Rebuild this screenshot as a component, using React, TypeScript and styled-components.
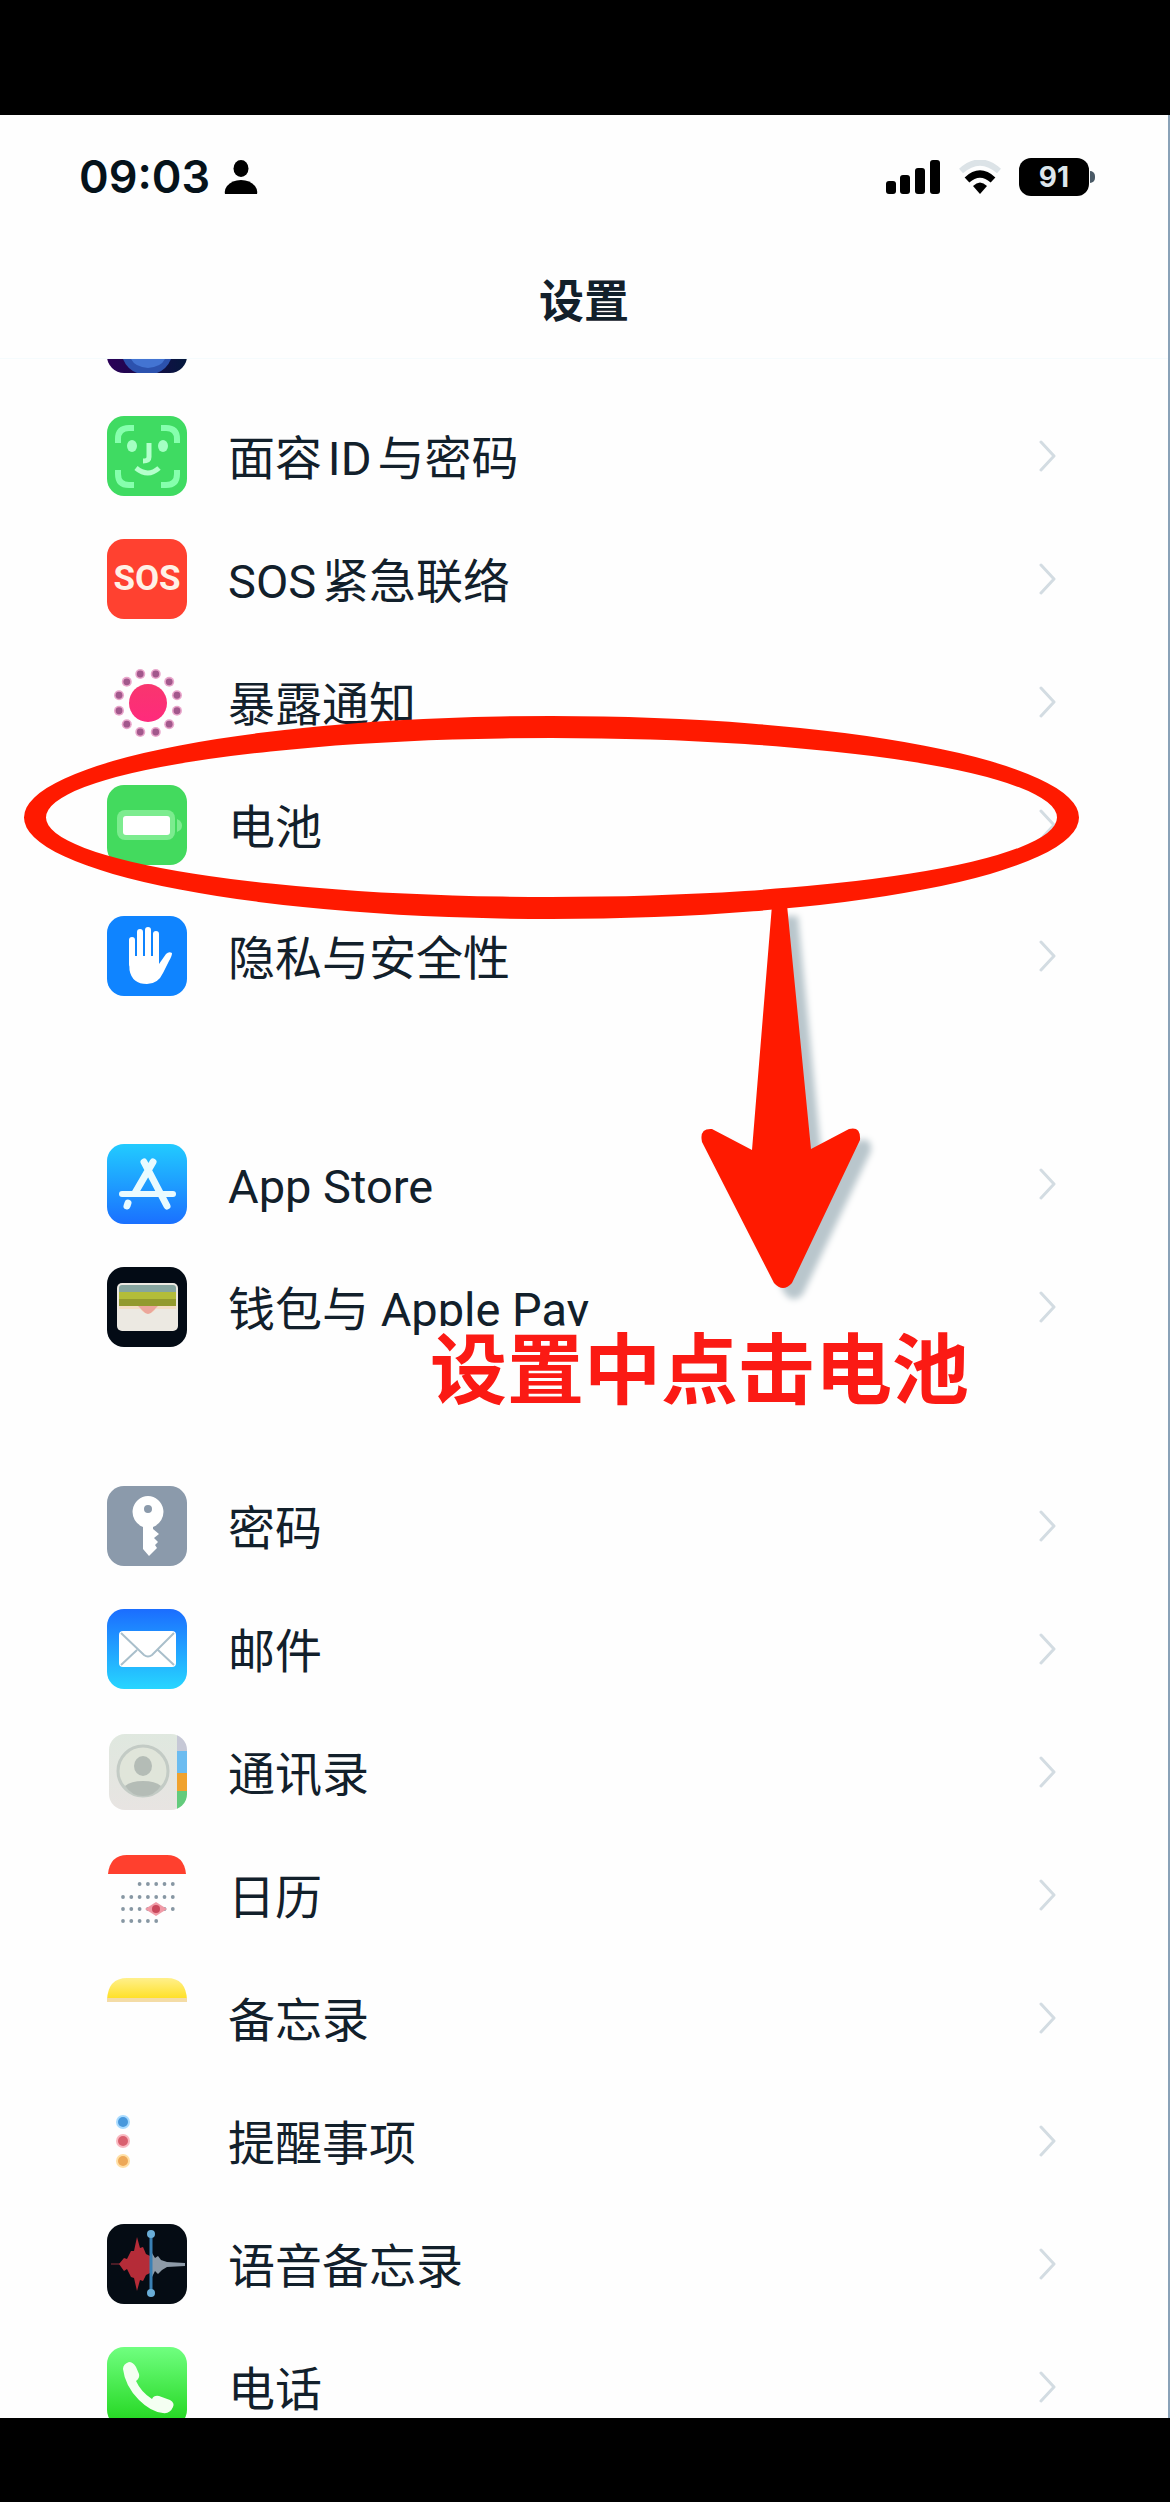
import React from "react";
import styled, { createGlobalStyle } from "styled-components";

const INK = "#12202b";
const MARK_RED = "#ff1a00";

const GlobalStyle = createGlobalStyle`
  * { box-sizing: border-box; }
  body {
    margin: 0;
    background: #000;
    color: ${INK};
    font-family: Roboto, "Noto Sans CJK SC", sans-serif;
  }
`;

const Page = styled.div`
  display: flex;
  height: 100vh;
  padding: 115px 0 84px;
  background: #000;
`;

const Screen = styled.main`
  flex: 1;
  display: flex;
  flex-direction: column;
  min-width: 0;
  overflow: hidden;
  background: #fefefe;
  border-right: 2px solid #8aa2b8;
`;

const StatusBar = styled.div`
  display: flex;
  justify-content: space-between;
  align-items: center;
  height: 124px;
  padding: 0 73px 0 79px;
`;

const StatusGroup = styled.div<{ $gap: number }>`
  display: flex;
  align-items: center;
  gap: ${(p) => p.$gap}px;
`;

const Clock = styled.time`
  font: 600 45px/56px Inter, sans-serif;
  color: #05121a;
`;

const BatteryPill = styled.div`
  display: flex;
  align-items: center;
`;

const BatteryBody = styled.div`
  width: 70px;
  height: 38px;
  border-radius: 12px;
  background: #000;
  color: #dde6ec;
  font: 700 28px/38px Inter, sans-serif;
  text-align: center;
`;

const BatteryNub = styled.div`
  width: 5px;
  height: 12px;
  margin-left: 1px;
  border-radius: 0 5px 5px 0;
  background: #4a5a66;
`;

const NavBar = styled.header`
  display: flex;
  justify-content: center;
  align-items: center;
  height: 120px;
  border-bottom: 1px solid #f5fbfd;
`;

const Title = styled.h1`
  margin: 0;
  font: 700 45px/64px "Noto Sans CJK SC", sans-serif;
`;

const Scroller = styled.div`
  flex: 1;
  display: flex;
  flex-direction: column;
  min-height: 0;
  overflow: hidden;
`;

const ScrolledAway = styled.div`
  flex: none;
  display: flex;
  align-items: flex-end;
  height: 35px;
  padding: 0 107px 21px;
  overflow: hidden;
`;

const Group = styled.ul<{ $after: number }>`
  flex: none;
  list-style: none;
  margin: 0 0 ${(p) => p.$after}px;
  padding: 0;
`;

const Item = styled.li`
  position: relative;
`;

const RowLink = styled.a`
  display: flex;
  align-items: center;
  gap: 41px;
  height: 123px;
  padding: 0 111px 0 107px;
  color: inherit;
  text-decoration: none;
`;

const Label = styled.span`
  flex: 1;
  padding-top: 6px;
  font-size: 47px;
  line-height: 64px;
  white-space: nowrap;
  text-autospace: normal;
`;

const IconSvg = styled.svg`
  flex: none;
  display: block;
  width: 80px;
  height: 80px;
`;

const SosTile = styled.span`
  flex: none;
  width: 80px;
  height: 80px;
  border-radius: 17px;
  background: #ff4130;
  color: #fff1e6;
  font: 700 35px/80px Roboto, sans-serif;
  text-align: center;
`;

const Glyph = styled.svg`
  flex: none;
  display: block;
`;

const Ring = styled.div`
  position: absolute;
  z-index: 1;
  top: -47px;
  left: 24px;
  right: 89px;
  height: 203px;
  border: 22px solid ${MARK_RED};
  border-radius: 50%;
  pointer-events: none;
`;

const ArrowMark = styled.svg`
  position: absolute;
  z-index: 1;
  top: 138px;
  left: 690px;
  filter: drop-shadow(11px 11px 3px #b9c6cc);
  pointer-events: none;
`;

const Caption = styled.strong`
  position: absolute;
  z-index: 1;
  top: 81px;
  left: 430px;
  background: #fefefe;
  color: #fb1a14;
  font: 700 77px/78px "Noto Sans CJK SC", sans-serif;
  white-space: nowrap;
`;

const Tile = ({ fill }: { fill: string }) => <rect width="80" height="80" rx="17" fill={fill} />;

const Gradient = ({ id, from, to, across }: { id: string; from: string; to: string; across?: boolean }) => (
  <linearGradient id={id} x1="0" y1="0" x2={across ? 1 : 0} y2={across ? 0 : 1}>
    <stop offset="0" stopColor={from} />
    <stop offset="1" stopColor={to} />
  </linearGradient>
);

const Icon = ({ children }: { children: React.ReactNode }) => (
  <IconSvg viewBox="0 0 80 80" aria-hidden="true">
    {children}
  </IconSvg>
);

const FaceIcon = () => (
  <Icon>
    <Tile fill="#3fdb62" />
    <g fill="none" stroke="#86ffad" strokeWidth="6">
      <path d="M11 27V23Q11 12 22 12H27M54 12H59Q70 12 70 23V27M70 54V58Q70 69 59 69H54M27 69H22Q11 69 11 58V54" />
      <path d="M42 27V41Q42 45 36 45" stroke="#b4ffcc" strokeWidth="5" />
      <path d="M29 52Q41 62 52 52" stroke="#b4ffcc" strokeWidth="5" />
    </g>
    <ellipse cx="25" cy="30" rx="5" ry="6" fill="#a4ffc2" />
    <ellipse cx="56" cy="30" rx="5" ry="6" fill="#a4ffc2" />
  </Icon>
);

const ExposureIcon = () => (
  <Icon>
    <Gradient id="exposure" from="#f8366e" to="#ff2a7c" />
    <circle cx="41" cy="41" r="19" fill="url(#exposure)" />
    {Array.from({ length: 12 }, (_, i) => {
      const a = ((i * 30 + 15) * Math.PI) / 180;
      return (
        <g key={i}>
          <circle cx={41 + 30 * Math.cos(a)} cy={41 + 30 * Math.sin(a)} r="5" fill="#e9a6cb" />
          <circle cx={41 + 30 * Math.cos(a)} cy={41 + 30 * Math.sin(a)} r="3.4" fill="#a2588c" />
        </g>
      );
    })}
  </Icon>
);

const BatteryIcon = () => (
  <Icon>
    <Tile fill="#43da5e" />
    <rect x="10" y="25" width="58" height="30" rx="8" fill="#7cec8f" />
    <rect x="16" y="31" width="47" height="19" rx="3" fill="#fff" />
    <path d="M70 34Q75 36 75 40.500T70 47Z" fill="#7cec8f" />
  </Icon>
);

const HandIcon = () => (
  <Icon>
    <Tile fill="#0f84ff" />
    <g stroke="#fff" strokeWidth="6" strokeLinecap="round">
      <path d="M25 24V48M33 16V46M41 14V46M49 18V48" />
    </g>
    <path d="M22 40H52V48L59 38Q62 35 65 37Q65 40 62 45L56 57Q51 68 40 68Q25 68 22.500 54Z" fill="#fff" />
  </Icon>
);

const StoreIcon = () => (
  <Icon>
    <Gradient id="store" from="#22cbff" to="#1a70ff" />
    <Tile fill="url(#store)" />
    <g stroke="#e9fbff" strokeWidth="7" strokeLinecap="round">
      <path d="M37 18L60 62M46 18L28 49M21 59L20 62" />
      <path d="M15 50H66" strokeWidth="6" />
    </g>
  </Icon>
);

const WalletIcon = () => (
  <Icon>
    <Tile fill="#030b15" />
    <rect x="10" y="16" width="61" height="48" rx="5" fill="#ece9e2" />
    <path d="M12 25V21Q12 18 15 18H66Q69 18 69 21V25Z" fill="#86a59f" />
    <path d="M12 25H69V32H12Z" fill="#b3bd3a" />
    <path d="M12 32H69V39H12Z" fill="#939a2e" />
    <path d="M12 39H31L35 44Q41 50 47 44L51 39H69V42H12Z" fill="#f3ddc4" />
    <path d="M31 39H51L46 44Q41 50 36 44Z" fill="#eca69b" />
  </Icon>
);

const KeyIcon = () => (
  <Icon>
    <Tile fill="#8b9aab" />
    <path
      fillRule="evenodd"
      fill="#fff"
      d="M41 10A16 16 0 0 1 46 41V43L52 48L47 52L51 56L48 59L50 62L42 70L36 63V41A16 16 0 0 1 41 10ZM41 19A4 4 0 1 0 41 27A4 4 0 1 0 41 19Z"
    />
  </Icon>
);

const MailIcon = () => (
  <Icon>
    <Gradient id="mail" from="#1b6dff" to="#27d6ff" />
    <Tile fill="url(#mail)" />
    <rect x="12" y="22" width="57" height="36" rx="4" fill="#fff" />
    <path d="M14 24L37 46Q41 49 45 46L67 24M14 56L30 41M67 56L51 41" fill="none" stroke="#a9bfcb" strokeWidth="2" />
  </Icon>
);

const ContactsIcon = () => (
  <Icon>
    <clipPath id="contactsClip">
      <rect x="2" y="2" width="78" height="76" rx="16" />
    </clipPath>
    <Gradient id="contacts" from="#dfe8df" to="#e8e4e2" />
    <g clipPath="url(#contactsClip)">
      <rect width="70" height="80" fill="url(#contacts)" />
      <rect x="70" width="10" height="19" fill="#c6c8d6" />
      <rect x="70" y="19" width="10" height="22" fill="#6cbcf0" />
      <rect x="70" y="41" width="10" height="18" fill="#f0a22e" />
      <rect x="70" y="59" width="10" height="21" fill="#63cb7c" />
    </g>
    <circle cx="36" cy="39" r="25" fill="#e0e5da" stroke="#c3cbc5" strokeWidth="3" />
    <ellipse cx="36" cy="34" rx="9" ry="10" fill="#b4bcb6" />
    <path d="M18 54Q24 49 36 49T54 54Q47 64 36 64T18 54Z" fill="#b4bcb6" />
  </Icon>
);

const CALENDAR_ROWS = [
  { y: 29, from: 2, to: 6 },
  { y: 42, from: 0, to: 6 },
  { y: 54, from: 0, to: 6 },
  { y: 66, from: 0, to: 4 },
];

const CalendarIcon = () => (
  <Icon>
    <path d="M1 19Q3 0 20 0H60Q77 0 79 19Z" fill="#ff402e" />
    {CALENDAR_ROWS.map(({ y, from, to }) =>
      Array.from({ length: to - from + 1 }, (_, i) => (
        <circle key={`${y}-${i}`} cx={16 + (from + i) * 8.3} cy={y} r="1.900" fill="#8797a3" />
      )),
    )}
    <path d="M38 54L49 47L60 54L49 61Z" fill="#f09aa6" />
    <circle cx="49" cy="54" r="4" fill="#c9485c" />
  </Icon>
);

const NotesIcon = () => (
  <Icon>
    <Gradient id="notes" from="#fff08c" to="#ffdf1e" />
    <path d="M0 22Q1 0 20 0H60Q79 0 80 22Z" fill="url(#notes)" />
    <path d="M0 20H80V24H0Z" fill="#f4dca6" />
  </Icon>
);

const RemindersIcon = () => (
  <Icon>
    <circle cx="16" cy="21" r="7" fill="#a9dbff" />
    <circle cx="16" cy="21" r="5" fill="#4898dc" />
    <circle cx="16" cy="40" r="7" fill="#f9b8c0" />
    <circle cx="16" cy="40" r="5" fill="#d9606e" />
    <circle cx="16" cy="60" r="7" fill="#ffdfa4" />
    <circle cx="16" cy="60" r="5" fill="#eda858" />
  </Icon>
);

const VoiceIcon = () => (
  <Icon>
    <Tile fill="#050c14" />
    <path d="M4 40H14" stroke="#4a1c26" strokeWidth="2" />
    <path d="M12 40L17 34L20 35L24 27L27 27L30 13L33 24L36 23L39 30L43 32V49L39 51L36 57L33 56L30 67L27 54L24 53L20 45L17 47Z" fill="#b52c38" />
    <path d="M45 29L48 34L51 32L54 36L60 38L78 39V42L60 43L55 46L51 50L48 47L45 53Z" fill="#8e9ba8" />
    <path d="M44 10V69" stroke="#3a80b4" strokeWidth="3" />
    <circle cx="44" cy="10" r="4" fill="#6aaed8" />
    <circle cx="44" cy="69" r="4" fill="#6aaed8" />
  </Icon>
);

const PhoneIcon = () => (
  <Icon>
    <Gradient id="phone" from="#70ff80" to="#1fd41b" />
    <Tile fill="url(#phone)" />
    <path
      fill="#f4fff2"
      d="M16 22Q16 17 22 15Q26 15 29 20L32 27Q33 31 29 34Q34 45 45 52Q47 48 52 49L63 53Q68 56 66 60Q63 67 56 66Q44 65 32 53Q18 39 16 22Z"
    />
  </Icon>
);

const SiriIcon = () => (
  <Icon>
    <Gradient id="siri" from="#2c0058" to="#04183c" across />
    <Tile fill="url(#siri)" />
    <path d="M16 66H64Q60 76 50 80H30Q20 76 16 66Z" fill="#2c52ae" />
    <path d="M24 66H58Q54 74 41 75Q28 74 24 66Z" fill="#4374d2" />
  </Icon>
);

const SosIcon = () => <SosTile aria-hidden="true">SOS</SosTile>;

const Chevron = () => (
  <Glyph width="18" height="32" viewBox="0 0 18 32" aria-hidden="true">
    <path d="M2 2L15 16L2 30" fill="none" stroke="#d3dce2" strokeWidth="3" strokeLinecap="round" strokeLinejoin="round" />
  </Glyph>
);

const Arrow = () => (
  <ArrowMark width="184" height="400" viewBox="0 0 184 400" aria-hidden="true">
    <path
      d="M82 4H97L121 248L159 228Q171 225 170 239L102 382Q93 392 84 382L12 241Q9 227 22 228L62 249Z"
      fill={MARK_RED}
    />
  </ArrowMark>
);

type Row = { label: string; icon: React.ComponentType; mark?: React.ReactNode };

const GROUPS: { after: number; rows: Row[] }[] = [
  {
    after: 8,
    rows: [
      { label: "面容ID与密码", icon: FaceIcon },
      { label: "SOS紧急联络", icon: SosIcon },
      { label: "暴露通知", icon: ExposureIcon },
      {
        label: "电池",
        icon: BatteryIcon,
        mark: (
          <>
            <Ring />
            <Arrow />
          </>
        ),
      },
    ],
  },
  { after: 105, rows: [{ label: "隐私与安全性", icon: HandIcon }] },
  {
    after: 96,
    rows: [
      { label: "App Store", icon: StoreIcon },
      { label: "钱包与 Apple Pay", icon: WalletIcon, mark: <Caption>设置中点击电池</Caption> },
    ],
  },
  {
    after: 0,
    rows: [
      { label: "密码", icon: KeyIcon },
      { label: "邮件", icon: MailIcon },
      { label: "通讯录", icon: ContactsIcon },
      { label: "日历", icon: CalendarIcon },
      { label: "备忘录", icon: NotesIcon },
      { label: "提醒事项", icon: RemindersIcon },
      { label: "语音备忘录", icon: VoiceIcon },
      { label: "电话", icon: PhoneIcon },
    ],
  },
];

export default function App() {
  return (
    <>
      <GlobalStyle />
      <Page lang="zh-CN">
        <Screen>
          <StatusBar>
            <StatusGroup $gap={14}>
              <Clock>09:03</Clock>
              <Glyph width="34" height="34" viewBox="0 0 34 34" aria-hidden="true">
                <ellipse cx="17" cy="8.500" rx="7.500" ry="8.500" />
                <path d="M1 34Q0 30 3 26Q8 20 17 20T31 26Q34 30 33 34Z" />
              </Glyph>
            </StatusGroup>
            <StatusGroup $gap={18}>
              <Glyph width="56" height="34" viewBox="0 0 56 34" aria-hidden="true">
                <rect x="1" y="21" width="10" height="13" rx="3" />
                <rect x="15" y="15" width="10" height="19" rx="3" />
                <rect x="30" y="8" width="10" height="26" rx="3" />
                <rect x="45" y="0" width="10" height="34" rx="3" />
              </Glyph>
              <Glyph width="42" height="34" viewBox="0 0 42 34" aria-hidden="true">
                <path d="M2 11Q21 -6 40 11" fill="none" stroke="#dce3e7" strokeWidth="6" />
                <path d="M8 20Q21 8 34 20" fill="none" stroke="#000" strokeWidth="7" />
                <path d="M14 26Q21 19 28 26L21 34Z" />
              </Glyph>
              <BatteryPill>
                <BatteryBody>91</BatteryBody>
                <BatteryNub />
              </BatteryPill>
            </StatusGroup>
          </StatusBar>
          <NavBar>
            <Title>设置</Title>
          </NavBar>
          <Scroller>
            <ScrolledAway>
              <SiriIcon />
            </ScrolledAway>
            {GROUPS.map((group, i) => (
              <Group key={i} $after={group.after}>
                {group.rows.map(({ label, icon: RowIcon, mark }) => (
                  <Item key={label}>
                    <RowLink href="#">
                      <RowIcon />
                      <Label>{label}</Label>
                      <Chevron />
                    </RowLink>
                    {mark}
                  </Item>
                ))}
              </Group>
            ))}
          </Scroller>
        </Screen>
      </Page>
    </>
  );
}
